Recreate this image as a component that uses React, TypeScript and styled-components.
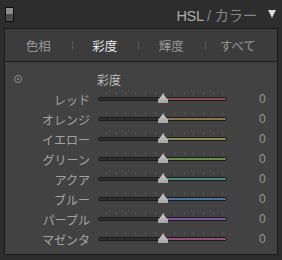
import styled, { createGlobalStyle } from "styled-components";

const GlobalStyle = createGlobalStyle`
  html, body {
    margin: 0;
    padding: 0;
    background: #2d2d2d;
  }
  body {
    font-family: "Noto Sans CJK JP", "Liberation Sans", sans-serif;
  }
`;

const channels = [
  { name: "レッド", color: "#8e5058" },
  { name: "オレンジ", color: "#8e7652" },
  { name: "イエロー", color: "#8c8c56" },
  { name: "グリーン", color: "#6a8c50" },
  { name: "アクア", color: "#528c80" },
  { name: "ブルー", color: "#50749a" },
  { name: "パープル", color: "#80569a" },
  { name: "マゼンタ", color: "#925278" },
];

const tabs = ["色相", "彩度", "輝度", "すべて"];

const App = () => {
  return (
    <>
      <GlobalStyle />
      <Frame>
        <Header>
          <ToggleSwitch />
          <Title>
            <strong>HSL</strong> / カラー
          </Title>
          <Caret />
        </Header>
        <Panel>
          <TabBar>
            {tabs.map((t, i) => (
              <Tab key={t} active={i === 1} divided={i > 0}>
                {t}
              </Tab>
            ))}
          </TabBar>
          <Content>
            <Row>
              <Label>
                <TargetIcon />
              </Label>
              <Heading>彩度</Heading>
            </Row>
            {channels.map((c) => (
              <Row key={c.name}>
                <Label>{c.name}</Label>
                <Slider>
                  <Ticks />
                  <Track color={c.color} />
                  <Thumb />
                </Slider>
                <Value>0</Value>
              </Row>
            ))}
          </Content>
        </Panel>
      </Frame>
    </>
  );
};

const Frame = styled.div`
  width: 282px;
  height: 260px;
  background: #2d2d2d;
  box-sizing: border-box;
  padding-bottom: 5px;
  display: flex;
  flex-direction: column;
`;

const Header = styled.div`
  height: 28px;
  display: flex;
  align-items: center;
  padding: 0 6px 0 5px;
  box-sizing: border-box;
`;

const ToggleSwitch = styled.div`
  width: 7px;
  height: 13px;
  border: 1px solid #111;
  background: linear-gradient(#8c8c8c 0 50%, #4c4c4c 50% 100%);
`;

const Title = styled.div`
  margin-left: auto;
  font-family: "Liberation Sans", "Noto Sans CJK JP", sans-serif;
  font-size: 14.5px;
  color: #858585;
  letter-spacing: -0.3px;
  strong {
    font-weight: normal;
    color: #ababab;
  }
`;

const Caret = styled.div`
  width: 0;
  height: 0;
  margin-left: 11px;
  border-left: 4.5px solid transparent;
  border-right: 4.5px solid transparent;
  border-top: 8px solid #d8d8d8;
`;

const Panel = styled.div`
  flex: 1;
  margin: 0 4px;
  border: 1px solid #1a1a1a;
  background: #424242;
  display: flex;
  flex-direction: column;
`;

const TabBar = styled.div`
  height: 32px;
  background: #3c3c3c;
  border-bottom: 1px solid #1a1a1a;
  display: grid;
  grid-template-columns: repeat(4, 1fr);
  padding-right: 6px;
`;

const Tab = styled.div<{ active?: boolean; divided?: boolean }>`
  position: relative;
  display: flex;
  align-items: center;
  justify-content: center;
  font-size: 12.5px;
  color: ${(p) => (p.active ? "#ececec" : "#979797")};
  &::before {
    content: "";
    display: ${(p) => (p.divided ? "block" : "none")};
    position: absolute;
    left: 0;
    top: 12px;
    height: 9px;
    width: 1px;
    background: #585858;
  }
`;

const Content = styled.div`
  padding-top: 7px;
  display: flex;
  flex-direction: column;
`;

const Row = styled.div`
  height: 20px;
  display: flex;
  align-items: center;
`;

const Label = styled.div`
  width: 85px;
  text-align: right;
  font-size: 12px;
  color: #a2a2a2;
  display: flex;
  justify-content: flex-end;
  align-items: center;
  &:has(> span) {
    justify-content: flex-start;
    padding-left: 9px;
    box-sizing: border-box;
  }
`;

const TargetIcon = styled.span`
  width: 6px;
  height: 6px;
  border: 1px solid #8e8e8e;
  border-radius: 50%;
  position: relative;
  &::after {
    content: "";
    position: absolute;
    left: 2px;
    top: 2px;
    width: 2px;
    height: 2px;
    border-radius: 50%;
    background: #8e8e8e;
  }
`;

const Heading = styled.div`
  margin-left: 7px;
  font-size: 12px;
  color: #bdbdbd;
`;

const Slider = styled.div`
  position: relative;
  margin-left: 9px;
  width: 128px;
  height: 20px;
  display: flex;
  align-items: center;
`;

const Ticks = styled.div`
  position: absolute;
  left: 7px;
  top: 3px;
  width: 118px;
  height: 3px;
  background: repeating-linear-gradient(
    to right,
    #565656 0 1px,
    transparent 1px 9.7px
  );
`;

const Track = styled.div<{ color: string }>`
  width: 100%;
  height: 2px;
  border: 1px solid #1c1c1c;
  border-radius: 2px;
  box-sizing: content-box;
  margin-left: -1px;
  background: linear-gradient(
    to right,
    #2e2e2e 0 50%,
    ${(p) => p.color} 50% 100%
  );
`;

const Thumb = styled.div`
  position: absolute;
  left: 59px;
  top: 4px;
  width: 10px;
  height: 10px;
  background: linear-gradient(#cfcfcf, #a2a2a2);
  clip-path: polygon(50% 0, 62% 25%, 100% 65%, 100% 100%, 0 100%, 0 65%, 38% 25%);
`;

const Value = styled.div`
  margin-left: 32px;
  font-family: "Liberation Sans", sans-serif;
  font-size: 12px;
  color: #969696;
`;

export default App;
